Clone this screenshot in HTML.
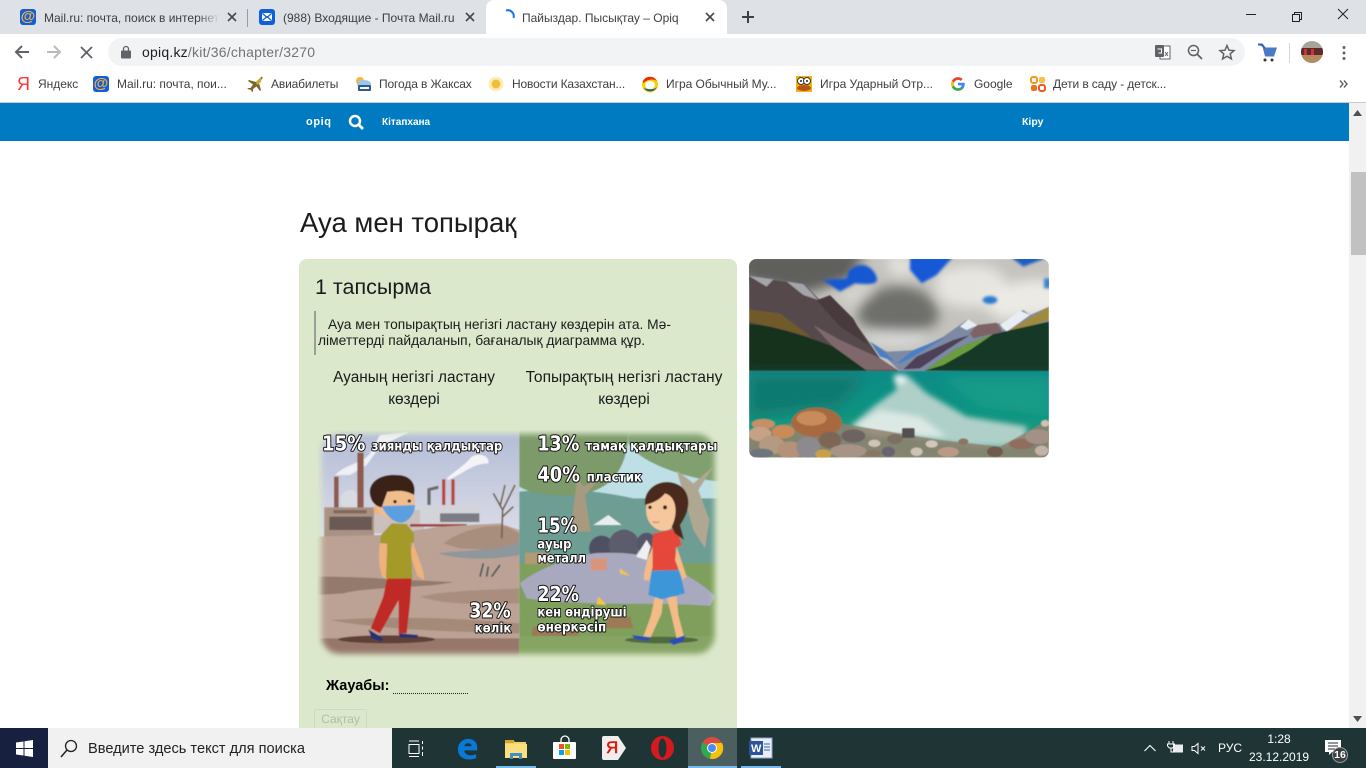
<!DOCTYPE html>
<html lang="kk"><head><meta charset="utf-8"><title>Пайыздар. Пысықтау – Opiq</title>
<style>
html,body{margin:0;padding:0;width:1366px;height:768px;overflow:hidden;background:#fff;font-family:"Liberation Sans",sans-serif}
.a{position:absolute;white-space:nowrap}
svg{position:absolute;overflow:visible}
.t{font-size:12px;color:#3c4043;top:9px;line-height:16px}
.b{font-size:12px;color:#3c4043;top:76px;line-height:16px;letter-spacing:-.03px}
.r{font-family:"Liberation Sans",sans-serif;color:#1b1b1b}
</style></head><body>
<!-- tab strip -->
<div class="a" style="left:0;top:0;width:1366px;height:34px;background:#dee1e6"></div>
<div class="a" style="left:486px;top:0;width:241px;height:34px;background:#fff;border-radius:8px 8px 0 0"></div>
<div class="a" style="left:247px;top:9px;width:1px;height:18px;background:#9a9da1"></div>
<div class="a" style="left:20px;top:9px;width:16px;height:16px;border-radius:3px;background:#0f5fdc;color:#ffb030;font:bold 15px/15px 'Liberation Sans',sans-serif;text-align:center">@</div>
<div class="a t" style="left:44px;top:10px;width:175px;overflow:hidden;-webkit-mask-image:linear-gradient(90deg,#000 88%,transparent)">Mail.ru: почта, поиск в интернете</div>
<svg style="left:227px;top:12px" width="10" height="10"><path d="M1 1l8 8M9 1L1 9" stroke="#45484c" stroke-width="1.600"/></svg>
<svg style="left:259px;top:9px" width="16" height="16"><rect width="16" height="16" rx="3" fill="#0f5fdc"/><rect x="3" y="4" width="10" height="8" rx="1" fill="#fff"/><path d="M3.500 4.500L8 8.500l4.500-4M3.500 11.500L8 7.500l4.500 4" stroke="#0f5fdc" stroke-width="1.200" fill="none"/></svg>
<div class="a t" style="left:283px;top:10px">(988) Входящие - Почта Mail.ru</div>
<svg style="left:465px;top:12px" width="10" height="10"><path d="M1 1l8 8M9 1L1 9" stroke="#45484c" stroke-width="1.600"/></svg>
<svg style="left:503px;top:9px" width="14" height="14"><path d="M3 1.500A6 6 0 0 1 10.500 9" stroke="#1a73e8" stroke-width="2" fill="none"/></svg>
<div class="a t" style="left:522px;top:10px;color:#3c4043">Пайыздар. Пысықтау – Opiq</div>
<svg style="left:705px;top:12px" width="10" height="10"><path d="M1 1l8 8M9 1L1 9" stroke="#45484c" stroke-width="1.600"/></svg>
<svg style="left:741px;top:10px" width="14" height="14"><path d="M7 1v12M1 7h12" stroke="#3c4043" stroke-width="2"/></svg>
<svg style="left:1245px;top:8px" width="110" height="20"><path d="M1 6.500h10" stroke="#222" stroke-width="1"/><path d="M47.500 6.500h7v7h-7zM49.500 6.500v-2h7v7h-2" stroke="#222" fill="none"/><path d="M93 0l10 10M103 0L93 10" stroke="#222" stroke-width="1" transform="translate(0 1)"/></svg>
<!-- toolbar -->
<div class="a" style="left:108px;top:38px;width:1137px;height:28px;border-radius:14px;background:#f1f3f4"></div>
<svg style="left:14px;top:44px" width="16" height="16"><path d="M15 8H2.500M8 2L2 8l6 6" stroke="#5f6368" stroke-width="2" fill="none"/></svg>
<svg style="left:46px;top:44px" width="16" height="16"><path d="M1 8h12.500M8 2l6 6-6 6" stroke="#babcbe" stroke-width="2" fill="none"/></svg>
<svg style="left:80px;top:46px" width="13" height="13"><path d="M1 1l11 11M12 1L1 12" stroke="#5f6368" stroke-width="1.800"/></svg>
<svg style="left:121px;top:45px" width="10" height="14"><path d="M2.500 6V4a2.500 2.500 0 0 1 5 0v2" stroke="#5f6368" stroke-width="1.300" fill="none"/><rect y="5.500" width="10" height="8" rx="1" fill="#5f6368"/></svg>
<div class="a" style="left:142px;top:44px;font-size:14px;line-height:16px;color:#70757a;letter-spacing:.22px"><span style="color:#202124">opiq.kz</span>/kit/36/chapter/3270</div>
<svg style="left:1155px;top:44px" width="16" height="16"><rect x="5" y="2" width="10" height="13" fill="#fff" stroke="#5f6368"/><rect width="9" height="12" y="1" rx="1" fill="#5f6368"/><path d="M2.500 5h4v4h-3" stroke="#fff" fill="none"/><path d="M10 8l3 4M13 8l-3 4" stroke="#5f6368"/></svg>
<svg style="left:1187px;top:44px" width="16" height="16"><circle cx="6.500" cy="6.500" r="5" stroke="#5f6368" stroke-width="1.500" fill="none"/><path d="M10 10l5 5" stroke="#5f6368" stroke-width="1.800"/><path d="M4 6.500h5" stroke="#5f6368" stroke-width="1.200"/></svg>
<svg style="left:1219px;top:44px" width="16" height="16"><path d="M8 1.500l2 4.700 5 .4-3.800 3.300 1.200 5L8 12.200l-4.400 2.700 1.200-5L1 6.600l5-.4z" stroke="#5f6368" stroke-width="1.500" fill="none"/></svg>
<svg style="left:1258px;top:44px" width="20" height="18"><path d="M0 0.500h4l3 12h9l3-9H6" fill="#4a7ac7"/><path d="M0 0.500h4l3 4" stroke="#2f66bb" stroke-width="2" fill="none"/><circle cx="7" cy="16" r="1.500" fill="#333"/><circle cx="14" cy="16" r="1.500" fill="#333"/></svg>
<div class="a" style="left:1289px;top:43px;width:1px;height:20px;background:#d5d7da"></div>
<svg style="left:1301px;top:41px" width="22" height="22"><defs><clipPath id="av"><circle cx="11" cy="11" r="11"/></clipPath></defs><g clip-path="url(#av)"><rect width="22" height="22" fill="#a8a49c"/><rect y="7" width="22" height="7" fill="#5e2a2a"/><rect x="3" y="8" width="3" height="6" fill="#c33"/><rect x="10" y="8" width="3" height="6" fill="#c33"/><rect y="14" width="22" height="8" fill="#b58b60"/></g></svg>
<svg style="left:1341px;top:45px" width="6" height="16"><circle cx="3" cy="2.500" r="1.500" fill="#5f6368"/><circle cx="3" cy="8" r="1.500" fill="#5f6368"/><circle cx="3" cy="13.500" r="1.500" fill="#5f6368"/></svg>
<!-- bookmarks -->
<div class="a" style="left:17px;top:74px;font:18px/20px 'Liberation Sans',sans-serif;color:#f33">Я</div>
<div class="a b" style="left:38px">Яндекс</div>
<div class="a" style="left:93px;top:76px;width:16px;height:16px;border-radius:3px;background:#0f5fdc;color:#ffb030;font:bold 15px/15px 'Liberation Sans',sans-serif;text-align:center">@</div>
<div class="a b" style="left:117px">Mail.ru: почта, пои...</div>
<svg style="left:247px;top:76px" width="16" height="16"><path d="M14.500 0.500L9 6 2 4 1 5l5 3.500L3.500 12 1 12l-.5 1L4 14l1 2 1-.5V13l3.500-2.500L13 15l1-1-2-7 4-5.500z" fill="#7c6a2b"/><path d="M14.500 .5L9 6l1 3 4-3z" fill="#c9a93c"/></svg>
<div class="a b" style="left:271px;letter-spacing:-.15px">Авиабилеты</div>
<svg style="left:355px;top:76px" width="17" height="16"><circle cx="5" cy="5" r="4" fill="#f5b63b"/><ellipse cx="9" cy="8" rx="7" ry="4" fill="#9cc6ea"/><rect x="3" y="9" width="13" height="6" rx="1" fill="#2a5b94"/><rect x="5" y="11" width="9" height="2" fill="#fff"/></svg>
<div class="a b" style="left:379px;letter-spacing:-.12px">Погода в Жаксах</div>
<svg style="left:488px;top:76px" width="16" height="16"><circle cx="8" cy="8" r="7.500" fill="#fbeeb8"/><circle cx="8" cy="8" r="4.500" fill="#f3bd3c"/></svg>
<div class="a b" style="left:512px;letter-spacing:-.15px">Новости Казахстан...</div>
<svg style="left:642px;top:76px" width="16" height="17"><circle cx="8" cy="8.500" r="8" fill="#f6d100"/><path d="M1 5a8 8 0 0 1 14 0C11 2.500 6 3 1 7z" fill="#e8281e"/><path d="M2 12c2 4 10 5 13-1-3 3-9 3-13 1z" fill="#0d55b8"/><ellipse cx="8" cy="9" rx="5" ry="4" fill="#fff"/></svg>
<div class="a b" style="left:666px">Игра Обычный Му...</div>
<svg style="left:796px;top:76px" width="16" height="16"><rect width="16" height="16" fill="#f2b705"/><circle cx="5" cy="5" r="3.500" fill="#fff" stroke="#333"/><circle cx="11" cy="5" r="3.500" fill="#fff" stroke="#333"/><circle cx="5" cy="5" r="1" fill="#222"/><circle cx="11" cy="5" r="1" fill="#222"/><ellipse cx="8" cy="12" rx="7" ry="3" fill="#b9511a"/></svg>
<div class="a b" style="left:820px">Игра Ударный Отр...</div>
<svg style="left:951px;top:77px" width="14" height="14" viewBox="0 0 48 48"><path fill="#ea4335" d="M24 10c3.500 0 6.700 1.300 9.100 3.500l6.800-6.800C35.600 2.800 30.100 0.500 24 .5 14.600.5 6.600 5.900 2.700 13.700l7.900 6.100C12.500 14.100 17.800 10 24 10z"/><path fill="#4285f4" d="M47 24.500c0-1.600-.1-3.200-.4-4.700H24v9h13c-.6 3-2.300 5.500-4.800 7.200l7.700 6C44.400 37.800 47 31.700 47 24.500z"/><path fill="#fbbc05" d="M10.600 28.700c-.5-1.500-.8-3-.8-4.700s.3-3.200.8-4.700l-7.900-6.100C1 17 .1 20.400.1 24s.9 7 2.600 10.200z"/><path fill="#34a853" d="M24 47.500c6.100 0 11.600-2 15.900-5.500l-7.700-6c-2.200 1.500-5 2.400-8.200 2.400-6.200 0-11.500-4.100-13.400-9.800l-7.900 6.100C6.600 42.100 14.600 47.500 24 47.500z"/></svg>
<div class="a b" style="left:974px">Google</div>
<svg style="left:1030px;top:76px" width="16" height="16"><rect x="1" y="1" width="6" height="6" rx="2" fill="none" stroke="#f39a1e" stroke-width="2"/><rect x="9" y="1" width="6" height="6" rx="2" fill="#f7c04a"/><rect x="1" y="9" width="6" height="6" rx="2" fill="#f2711c"/><rect x="9" y="9" width="6" height="6" rx="2" fill="none" stroke="#ee5a24" stroke-width="2"/></svg>
<div class="a b" style="left:1053px;letter-spacing:-.12px">Дети в саду - детск...</div>
<svg style="left:1339px;top:80px" width="9" height="8"><path d="M1 .5l3 3.500-3 3.500M5 .5l3 3.500-3 3.500" stroke="#5f6368" stroke-width="1.400" fill="none"/></svg>
<div class="a" style="left:0;top:102px;width:1366px;height:1px;background:#c8cbd0"></div>
<!-- site header -->
<div class="a" style="left:0;top:103px;width:1349px;height:38px;background:#007bc2"></div>
<div class="a" style="left:306px;top:115px;font:bold 11px/14px 'Liberation Sans',sans-serif;color:#fff;letter-spacing:.6px">opiq</div>
<svg style="left:348px;top:114px" width="16" height="16"><circle cx="7" cy="7" r="5" stroke="#fff" stroke-width="2.500" fill="none"/><path d="M10.500 10.500l4.500 4.500" stroke="#fff" stroke-width="2.800"/></svg>
<div class="a" style="left:382px;top:116px;font:bold 10px/14px 'Liberation Sans',sans-serif;color:#fff">Кітапхана</div>
<div class="a" style="left:1022px;top:115px;font:bold 10.500px/14px 'Liberation Sans',sans-serif;color:#fff">Кіру</div>
<!-- scrollbar -->
<div class="a" style="left:1349px;top:103px;width:17px;height:625px;background:#f1f1f1"></div>
<div class="a" style="left:1351px;top:172px;width:15px;height:83px;background:#c1c1c1"></div>
<svg style="left:1353px;top:110px" width="9" height="6"><path d="M4.500 0L9 6H0z" fill="#505050"/></svg>
<svg style="left:1353px;top:716px" width="9" height="6"><path d="M4.500 6L9 0H0z" fill="#505050"/></svg>
<!-- content -->
<div class="a r" style="left:300px;top:208px;font-size:27.500px;line-height:30px">Ауа мен топырақ</div>
<div class="a" style="left:299px;top:259px;width:438px;height:480px;background:#dce8cb;border-radius:8px"></div>
<div class="a r" style="left:315px;top:275px;font-size:21.500px;line-height:24px">1 тапсырма</div>
<div class="a" style="left:314px;top:311px;width:2px;height:44px;background:#9aa096"></div>
<div class="a r" style="left:328px;top:317px;font-size:13.800px;line-height:16px">Ауа мен топырақтың негізгі ластану көздерін ата. Мә-</div>
<div class="a r" style="left:318px;top:333px;font-size:13.800px;line-height:16px">ліметтерді пайдаланып, бағаналық диаграмма құр.</div>
<div class="a r" style="left:304px;width:220px;text-align:center;top:369px;font-size:15.400px;line-height:18px">Ауаның негізгі ластану</div>
<div class="a r" style="left:304px;width:220px;text-align:center;top:391px;font-size:15.400px;line-height:18px">көздері</div>
<div class="a r" style="left:514px;width:220px;text-align:center;top:369px;font-size:15.600px;line-height:18px">Топырақтың негізгі ластану</div>
<div class="a r" style="left:514px;width:220px;text-align:center;top:391px;font-size:15.400px;line-height:18px">көздері</div>
<!-- illustration: coordinates follow a 3x grid -->
<svg style="left:300px;top:420px" width="440" height="310" viewBox="0 0 1320 930">
<defs>
<filter id="fe" x="-10%" y="-10%" width="120%" height="120%"><feGaussianBlur stdDeviation="9"/></filter>
<filter id="sf"><feGaussianBlur stdDeviation="1.500"/></filter>
<mask id="mk"><rect x="64" y="42" width="1180" height="660" rx="55" fill="#fff" filter="url(#fe)"/></mask>
<linearGradient id="ls" x1="0" y1="0" x2="0" y2="1"><stop offset="0" stop-color="#b2bcd6"/><stop offset=".5" stop-color="#dfdfe8"/></linearGradient>
<style>.ov{font-family:"DejaVu Sans",sans-serif;font-weight:bold;fill:#fff;stroke:#111;stroke-width:6px;paint-order:stroke;stroke-linejoin:round}.n{font-size:60px}.l{font-size:41px}</style>
</defs>
<g mask="url(#mk)"><g filter="url(#sf)">
<rect x="50" y="30" width="608" height="690" fill="url(#ls)"/>
<path d="M105 165C140 130 190 130 210 100L240 45 330 35 240 80 200 135 150 165z" fill="#eef0f4"/>
<path d="M440 175C470 150 500 130 510 115 530 95 570 105 565 130 520 130 490 160 445 180z" fill="#f4f4f7"/>
<ellipse cx="150" cy="240" rx="28" ry="30" fill="#d9dbe3"/>
<rect x="172" y="98" width="19" height="175" fill="#8e5a4d"/><rect x="102" y="170" width="14" height="100" fill="#8e5a4d"/>
<rect x="426" y="178" width="10" height="132" fill="#b8483e"/><rect x="454" y="178" width="10" height="132" fill="#b8483e"/><path d="M382 308V205L415 197V207L392 212V308z" fill="#6a6a6a"/>
<rect x="72" y="262" width="150" height="95" fill="#a99184"/><rect x="88" y="290" width="128" height="40" fill="#6b5a52"/><rect x="100" y="270" width="100" height="10" fill="#7f675c"/>
<rect x="222" y="270" width="150" height="70" fill="#cbc0bd"/><rect x="360" y="255" width="180" height="60" fill="#d3d4da"/><rect x="420" y="280" width="118" height="26" fill="#7c7d84"/>
<rect x="330" y="312" width="170" height="8" fill="#a2433b"/>
<path d="M50 350L250 345 420 320 600 310 658 330V720H50z" fill="#bba294"/>
<path d="M430 370C480 330 570 310 620 320L658 340V395L480 385z" fill="#a88e7d"/>
<path d="M415 400C470 390 600 395 658 365V405C580 420 480 420 415 400z" fill="#8e979b"/>
<path d="M50 470C200 470 300 480 460 486 380 505 200 500 130 520L50 525z" fill="#937a6c"/>
<path d="M360 530C450 510 570 510 658 505V550C560 550 450 560 360 530z" fill="#a98e7e"/>
<path d="M90 600C260 590 420 590 658 610V640C450 635 250 630 90 600z" fill="#a58a7a"/>
<path d="M50 655H658V720H50z" fill="#96776a"/>
<ellipse cx="260" cy="658" rx="145" ry="12" fill="#604137"/>
<path d="M605 355L608 270 580 220M608 270L645 195M608 290L640 260M600 260L615 195" stroke="#76604f" stroke-width="5" fill="none"/>
<path d="M540 470L550 430M560 470L565 440M575 470L600 435" stroke="#47555a" stroke-width="5"/>
<!-- boy -->
<path d="M262 470L335 470 330 550 320 640 296 640 296 540 240 640 212 625 250 530z" fill="#bf2b27"/>
<path d="M205 628L250 655 245 665 215 655z" fill="#28306f"/><path d="M296 640L355 645 350 654 300 652z" fill="#28306f"/>
<path d="M240 370C232 410 240 460 250 474L262 478 262 370z" fill="#eeb27c"/><path d="M340 365C350 410 375 450 372 480L352 468 330 400z" fill="#eeb27c"/>
<path d="M243 345L275 310 320 312 342 340 342 368 332 368 337 475 258 476 262 372 240 368z" fill="#a39a2c"/>
<ellipse cx="235" cy="268" rx="14" ry="16" fill="#eeb27c"/>
<ellipse cx="285" cy="240" rx="60" ry="60" fill="#f0bd8d"/><path d="M212 232C198 190 240 160 290 165 330 165 350 190 342 225 310 205 280 215 262 215L245 262C230 260 216 248 212 232z" fill="#3b2016"/>
<path d="M245 258C280 258 320 256 345 255 345 285 320 310 300 308 280 305 260 290 245 258z" fill="#5c9fe0"/>
<circle cx="285" cy="245" r="5" fill="#33201a"/><circle cx="328" cy="243" r="5" fill="#33201a"/>
<!-- right half -->
<rect x="658" y="30" width="600" height="690" fill="#bddfe5"/>
<path d="M658 215C760 205 860 205 1000 235H1258V440H658z" fill="#6d9d93"/>
<path d="M658 30H985C985 110 960 210 830 225 760 230 690 220 658 200z" fill="#7d9a6a"/>
<path d="M985 30H1258V185C1160 175 1020 130 985 70z" fill="#81a06f"/>
<path d="M830 185L812 335 872 335 855 225 905 170 850 200 815 150z" fill="#a89a7e"/>
<path d="M1130 150L1180 330 1215 385 1228 300 1195 210 1240 140 1180 190z" fill="#b0a793"/>
<path d="M880 315L925 285 965 315z" fill="#e8eeee"/>
<rect x="658" y="430" width="600" height="290" fill="#7f9f5c"/>
<ellipse cx="905" cy="385" rx="38" ry="38" fill="#4f5063"/><ellipse cx="972" cy="375" rx="46" ry="46" fill="#5b5c6d"/><ellipse cx="1040" cy="370" rx="30" ry="32" fill="#55566a"/>
<path d="M660 490C720 440 800 420 880 400 960 395 1060 400 1110 440 1170 470 1220 500 1245 530L1230 558C1100 545 850 560 680 535z" fill="#a8a9bf"/>
<rect x="675" y="398" width="70" height="34" fill="#b39a74"/>
<path d="M1008 410L1040 360 1052 380 1040 420z" fill="#f0efef"/>
<path d="M872 415h48v36h-48z" fill="#ef8b5b" opacity=".7"/><path d="M960 445l30 22-30-6z" fill="#f2c73a"/><path d="M895 530l25 25-30-2z" fill="#f2c73a"/>
<path d="M700 620L820 620 850 665 690 665z" fill="#9b7a55"/><path d="M925 590L990 590 1000 625 915 625z" fill="#9b7a55"/>
<rect x="658" y="648" width="600" height="72" fill="#86a463"/>
<ellipse cx="1085" cy="660" rx="110" ry="10" fill="#4f6b3a"/>
<!-- girl -->
<path d="M1065 530L1052 590 1030 650 1052 652 1085 580 1090 530z" fill="#f3bb86"/><path d="M1100 530L1115 590 1130 655 1152 650 1135 585 1130 530z" fill="#f3bb86"/>
<path d="M995 645L1052 652 1045 663 1005 657z" fill="#2c50b4"/><path d="M1105 662L1155 646 1150 665 1120 675z" fill="#2c50b4"/>
<path d="M1055 450L1138 448 1155 520 1085 538 1045 525z" fill="#3d96d8"/>
<path d="M1060 340L1130 325 1145 375 1125 385 1135 450 1055 452 1055 380z" fill="#e5463b"/>
<path d="M1058 380C1045 410 1030 450 1032 480L1048 482 1058 440z" fill="#f3bb86"/><path d="M1130 380L1160 470 1148 480 1125 420z" fill="#f3bb86"/>
<ellipse cx="1090" cy="270" rx="52" ry="62" fill="#f6c79c"/><path d="M1035 255C1030 205 1080 175 1125 190 1170 205 1180 260 1140 315L1152 360 1125 340 1115 320C1135 280 1130 230 1095 220 1075 245 1050 250 1035 255z" fill="#4a2c1e"/>
<circle cx="1050" cy="262" r="5" fill="#33201a"/><circle cx="1095" cy="262" r="6" fill="#33201a"/><path d="M1058 305q10 5 20 0" stroke="#c56a5e" stroke-width="3" fill="none"/>
</g></g>
<text class="ov n" x="66" y="92" textLength="130" lengthAdjust="spacingAndGlyphs">15%</text>
<text class="ov l" x="215" y="92" textLength="392" lengthAdjust="spacingAndGlyphs">зиянды қалдықтар</text>
<text class="ov n" x="712" y="92" textLength="126" lengthAdjust="spacingAndGlyphs">13%</text>
<text class="ov l" x="856" y="92" textLength="396" lengthAdjust="spacingAndGlyphs">тамақ қалдықтары</text>
<text class="ov n" x="712" y="184" textLength="128" lengthAdjust="spacingAndGlyphs">40%</text>
<text class="ov l" x="860" y="184" textLength="166" lengthAdjust="spacingAndGlyphs">пластик</text>
<text class="ov n" x="712" y="338" textLength="120" lengthAdjust="spacingAndGlyphs">15%</text>
<text class="ov l" x="712" y="385" textLength="102" lengthAdjust="spacingAndGlyphs">ауыр</text>
<text class="ov l" x="712" y="428" textLength="146" lengthAdjust="spacingAndGlyphs">металл</text>
<text class="ov n" x="712" y="543" textLength="125" lengthAdjust="spacingAndGlyphs">22%</text>
<text class="ov l" x="712" y="590" textLength="268" lengthAdjust="spacingAndGlyphs">кен өндіруші</text>
<text class="ov l" x="712" y="634" textLength="207" lengthAdjust="spacingAndGlyphs">өнеркәсіп</text>
<text class="ov n" x="508" y="593" textLength="124" lengthAdjust="spacingAndGlyphs">32%</text>
<text class="ov l" x="524" y="637" textLength="110" lengthAdjust="spacingAndGlyphs">көлік</text>
</svg>
<div class="a" style="left:326px;top:678px;font:bold 14.500px/17px 'Liberation Sans',sans-serif;color:#000">Жауабы:</div>
<div class="a" style="left:393px;top:693px;width:75px;border-bottom:1px dotted #222"></div>
<div class="a" style="left:314px;top:709px;width:51px;height:24px;border:1px solid #cfd8c5;color:#b3bba9;font-size:12px;line-height:19px;text-align:center;border-radius:2px">Сақтау</div>
<!-- landscape -->
<svg style="left:740px;top:250px" width="320" height="215" viewBox="0 0 960 645">
<defs>
<clipPath id="lk"><rect x="27" y="27" width="900" height="596" rx="22"/></clipPath>
<filter id="b1"><feGaussianBlur stdDeviation="1.500"/></filter>
<filter id="b3"><feGaussianBlur stdDeviation="4"/></filter><filter id="b6" x="-20%" y="-20%" width="140%" height="140%"><feGaussianBlur stdDeviation="8"/></filter><filter id="b10" x="-30%" y="-30%" width="160%" height="160%"><feGaussianBlur stdDeviation="18"/></filter>
<linearGradient id="wt" x1="0" y1="0" x2="0" y2="1"><stop offset="0" stop-color="#0f8b88"/><stop offset=".5" stop-color="#0f9480"/><stop offset="1" stop-color="#3d9f85"/></linearGradient>
</defs>
<g clip-path="url(#lk)"><g filter="url(#b1)">
<rect x="27" y="27" width="900" height="340" fill="#c4c3bd"/>
<g filter="url(#b10)">
<path d="M0 0H380L330 90 200 130 0 90z" fill="#5f5f5c"/>
<path d="M380 140C440 90 560 100 590 170S540 250 430 240 350 180 380 140z" fill="#6e6e6b"/>
<path d="M440 20H520V80L450 70z" fill="#e4e3dd"/>
<path d="M590 70C700 20 800 50 800 110S660 200 590 140z" fill="#e6e5df"/>
<path d="M710 150C800 90 900 70 960 110V190L780 210z" fill="#ebeae4"/>
<path d="M280 130L380 90 400 130 340 170z" fill="#d5d4ce"/>
<ellipse cx="470" cy="265" rx="90" ry="20" fill="#dcdddc"/>
</g>
<g filter="url(#b3)">
<path d="M325 65C345 40 385 35 405 70S395 105 345 100L300 125 248 90 320 85z" fill="#1858cf"/>
<path d="M510 20H640L590 75 545 100 510 60z" fill="#1458d6"/>
<path d="M810 20H930L850 50z" fill="#1d5cc4"/><ellipse cx="750" cy="150" rx="22" ry="12" fill="#2b7ad0"/><rect x="912" y="85" width="20" height="30" fill="#3a82d0"/>
</g>
<path d="M27 80L130 95 190 100 240 150 270 135 340 210 390 280 420 325 480 365H27z" fill="#554a4c"/>
<path d="M27 78L100 88 80 110zM140 95L190 102 235 150 190 135z" fill="#a3a5ab"/>
<path d="M230 150L270 135 340 205 385 285 300 230z" fill="#483a3c"/>
<path d="M27 178L120 190 215 262 150 245 27 215z" fill="#6f5a2c"/>
<path d="M220 225L300 270 410 320 470 360H350L260 270z" fill="#7f686c"/>
<path d="M27 222C100 225 200 260 280 290L380 362H27z" fill="#16321f"/>
<path d="M390 275L440 305 530 300 610 260 680 210 710 225 780 220 790 240 800 210 850 180 870 195 927 170V365H480z" fill="#7d8aa4"/>
<path d="M390 275L440 310 470 340 520 300 620 260 520 320 480 340 420 320z" fill="#4a7fc4"/>
<path d="M690 250L710 225 770 218 787 245 700 265z" fill="#7d6364"/>
<path d="M660 230L685 208 712 226 680 240zM780 225L840 182 870 195 800 245z" fill="#e8edf4"/>
<path d="M490 358L530 320 640 270 690 255 620 300 540 355z" fill="#4e4158"/>
<path d="M800 245L927 170V210L850 235z" fill="#a08a3e"/>
<path d="M555 362L650 295 760 252 927 215V365z" fill="#173825"/>
<path d="M555 362L650 295 760 252 690 300 610 345z" fill="#6c9d3e"/>
<rect x="27" y="363" width="900" height="260" fill="url(#wt)"/>
<g filter="url(#b10)">
<path d="M27 375H380L300 470 27 500z" fill="#0a6f6a" opacity=".7"/>
<path d="M600 380H927V500L720 470z" fill="#12a58c" opacity=".55"/>
</g>
<g filter="url(#b6)">
<path d="M460 375H500L560 430 680 500 860 530 850 590 700 590 500 560 330 530 400 470 470 420z" fill="#aed0c9"/>
<path d="M340 530L420 480 540 500 620 560H400z" fill="#dbe8e4"/>
<ellipse cx="480" cy="388" rx="17" ry="15" fill="#e6eff0"/>
</g>
<path d="M27 540L160 520 300 520 420 540 600 570 780 590 927 510V623H27z" fill="#91806c" opacity=".85"/>
<ellipse cx="230" cy="517" rx="75" ry="44" fill="#a9693f"/><ellipse cx="215" cy="505" rx="45" ry="22" fill="#c88c5c"/>
<ellipse cx="70" cy="522" rx="35" ry="15" fill="#c49066"/><ellipse cx="60" cy="552" rx="34" ry="22" fill="#c7a183"/><ellipse cx="130" cy="545" rx="34" ry="20" fill="#c98b59"/>
<ellipse cx="95" cy="585" rx="38" ry="28" fill="#b39a80"/><ellipse cx="150" cy="600" rx="38" ry="26" fill="#b39279"/><ellipse cx="205" cy="592" rx="36" ry="32" fill="#8d8a8f"/><ellipse cx="270" cy="570" rx="34" ry="25" fill="#7e6657"/><ellipse cx="340" cy="558" rx="36" ry="20" fill="#6d6464"/><ellipse cx="325" cy="603" rx="55" ry="20" fill="#a89486"/><ellipse cx="65" cy="610" rx="35" ry="14" fill="#6d747c"/><ellipse cx="250" cy="612" rx="24" ry="14" fill="#c9a049"/>
<rect x="486" y="534" width="38" height="30" rx="5" fill="#555050"/><ellipse cx="465" cy="567" rx="24" ry="15" fill="#7a6f64"/><ellipse cx="403" cy="580" rx="18" ry="11" fill="#d0c4b8"/><ellipse cx="445" cy="605" rx="20" ry="15" fill="#6b6270"/><ellipse cx="530" cy="605" rx="18" ry="13" fill="#cfc3b7"/><ellipse cx="575" cy="582" rx="18" ry="11" fill="#d3c7bb"/><ellipse cx="625" cy="606" rx="32" ry="15" fill="#b89a87"/><ellipse cx="765" cy="605" rx="24" ry="16" fill="#6f5a50"/><ellipse cx="845" cy="582" rx="38" ry="16" fill="#8f6e61"/><ellipse cx="895" cy="560" rx="40" ry="22" fill="#a39187"/><ellipse cx="905" cy="602" rx="20" ry="15" fill="#c2b2a8"/><ellipse cx="915" cy="520" rx="12" ry="10" fill="#d1c1b5"/><ellipse cx="670" cy="575" rx="15" ry="10" fill="#8c7462"/><ellipse cx="400" cy="610" rx="25" ry="10" fill="#8b7665"/>
</g></g>
</svg>
<!-- taskbar -->
<div class="a" style="left:0;top:728px;width:1366px;height:40px;background:#1e3435"></div>
<div class="a" style="left:0;top:728px;width:48px;height:40px;background:#17203e"></div>
<svg style="left:16px;top:740px" width="18" height="17"><path d="M0 2.500L7.500 1.500V8H0zM8.500 1.300L17 0V8H8.500zM0 9H7.500V15.500L0 14.500zM8.500 9H17V17L8.500 15.700z" fill="#fff"/></svg>
<div class="a" style="left:48px;top:728px;width:344px;height:40px;background:#f1f1f1"></div>
<svg style="left:60px;top:739px" width="18" height="19"><circle cx="11" cy="7" r="5.500" stroke="#222" stroke-width="1.300" fill="none"/><path d="M7 11L1 18" stroke="#222" stroke-width="1.500"/></svg>
<div class="a" style="left:88px;top:740px;font-size:14.600px;line-height:18px;color:#222">Введите здесь текст для поиска</div>
<svg style="left:408px;top:740px" width="17" height="17"><path d="M1 4.500h10v9H1zM1 1h10M1 16.500h10M14.500 1v3M14.500 6.500v3M14.500 12v4" stroke="#fff" fill="none"/></svg>
<svg style="left:457px;top:737px" width="21" height="23" viewBox="0 0 23 24"><path fill="#0a78d7" fill-rule="evenodd" d="M22 14H8c0 5 7 7 13 4v4.500c-9 3.500-20 1-20-9.500C1 5 8 1 13 1.500 20 2 23 7 22 14zM8 9.500h8c0-4-7-4.500-8 0z"/></svg>
<svg style="left:505px;top:739px" width="22" height="20"><path d="M0 2a1 1 0 0 1 1-1h7l2 2h11v16H0z" fill="#f3d26b"/><rect y="1" width="9" height="3" fill="#dba52d"/><rect y="5" width="22" height="14" fill="#fbdf7f"/><path d="M5 14h12v6h-3v-3H8v3H5z" fill="#3b8fce"/></svg>
<svg style="left:553px;top:736px" width="24" height="24"><path d="M8 6V4a4 4 0 0 1 8 0v2" stroke="#fff" fill="none" stroke-width="1.300"/><rect y="6" width="23" height="17" rx="1" fill="#fff"/><rect x="6" y="8" width="5" height="5" fill="#f25022"/><rect x="12" y="8" width="5" height="5" fill="#7fba00"/><rect x="6" y="14" width="5" height="5" fill="#00a4ef"/><rect x="12" y="14" width="5" height="5" fill="#ffb900"/></svg>
<svg style="left:602px;top:736px" width="24" height="24"><path d="M2 0H16L24 12 16 24H2a2 2 0 0 1-2-2V2a2 2 0 0 1 2-2z" fill="#eee"/></svg>
<div class="a" style="left:606px;top:737px;font:17px/22px 'Liberation Sans',sans-serif;color:#e61400;-webkit-text-stroke:.5px #e61400">Я</div>
<svg style="left:651px;top:736px" width="23" height="24"><ellipse cx="11.500" cy="12" rx="11.500" ry="12" fill="#d41a1f"/><ellipse cx="11.500" cy="12" rx="4" ry="9.500" fill="#1e3435"/></svg>
<div class="a" style="left:688px;top:728px;width:49px;height:40px;background:#4b5f60"></div>
<svg style="left:701px;top:737px" width="22" height="22" viewBox="0 0 22 22"><circle cx="11" cy="11" r="11" fill="#dd4b3e"/><path d="M11 11L1.500 5.500A11 11 0 0 0 9 21.800z" fill="#2fa84f"/><path d="M11 6H21A11 11 0 0 1 9 21.800L11 11z" fill="#f4c20d"/><circle cx="11" cy="11" r="5" fill="#fff"/><circle cx="11" cy="11" r="4" fill="#4c8bf5"/></svg>
<svg style="left:749px;top:736px" width="23" height="24"><rect x="2" y="2" width="21" height="20" fill="#e9eef6" stroke="#8aa6d4"/><rect y="5" width="14" height="14" fill="#2a5699"/><text x="2" y="16" font-size="11" font-weight="bold" fill="#fff" font-family="Liberation Sans,sans-serif">W</text><path d="M15 8h6M15 11h6M15 14h6" stroke="#3a66ad"/></svg>
<div class="a" style="left:496px;top:766px;width:40px;height:2px;background:#76b9ed"></div>
<div class="a" style="left:688px;top:766px;width:49px;height:2px;background:#76b9ed"></div>
<div class="a" style="left:741px;top:766px;width:40px;height:2px;background:#76b9ed"></div>
<svg style="left:1144px;top:744px" width="12" height="8"><path d="M.5 7L6 1.500 11.500 7" stroke="#fff" fill="none" stroke-width="1.100"/></svg>
<svg style="left:1167px;top:741px" width="17" height="13"><path d="M2 0v3M6 0v3M0.500 3h7v2l-2 2h-3l-2-2zM4 7v4h4" stroke="#fff" fill="none"/><rect x="6" y="3.500" width="10" height="8" fill="#fff" opacity=".9"/></svg>
<svg style="left:1191px;top:742px" width="15" height="13"><path d="M1 4.500h2.500L7 1.500v10L3.500 8.500H1z" stroke="#fff" fill="none"/><path d="M10 4.500l4 4M14 4.500l-4 4" stroke="#fff"/></svg>
<div class="a" style="left:1218px;top:740px;font-size:12px;line-height:16px;color:#fff">РУС</div>
<div class="a" style="left:1249px;width:60px;text-align:center;top:731px;font-size:12px;line-height:16px;color:#fff">1:28</div>
<div class="a" style="left:1249px;width:60px;text-align:center;top:749px;font-size:12px;line-height:16px;color:#fff">23.12.2019</div>
<svg style="left:1325px;top:740px" width="28" height="26"><path d="M0 0H16V12H7L4 15V12H0z" fill="#fff"/><path d="M3 3h10M3 6h10M3 9h7" stroke="#1e3435"/><circle cx="15" cy="15" r="7.500" fill="#3b3f41" stroke="#9a9d9f"/></svg>
<div class="a" style="left:1332px;top:749px;width:16px;text-align:center;font:bold 10.500px/13px 'Liberation Sans',sans-serif;color:#fff">16</div>
</body></html>
